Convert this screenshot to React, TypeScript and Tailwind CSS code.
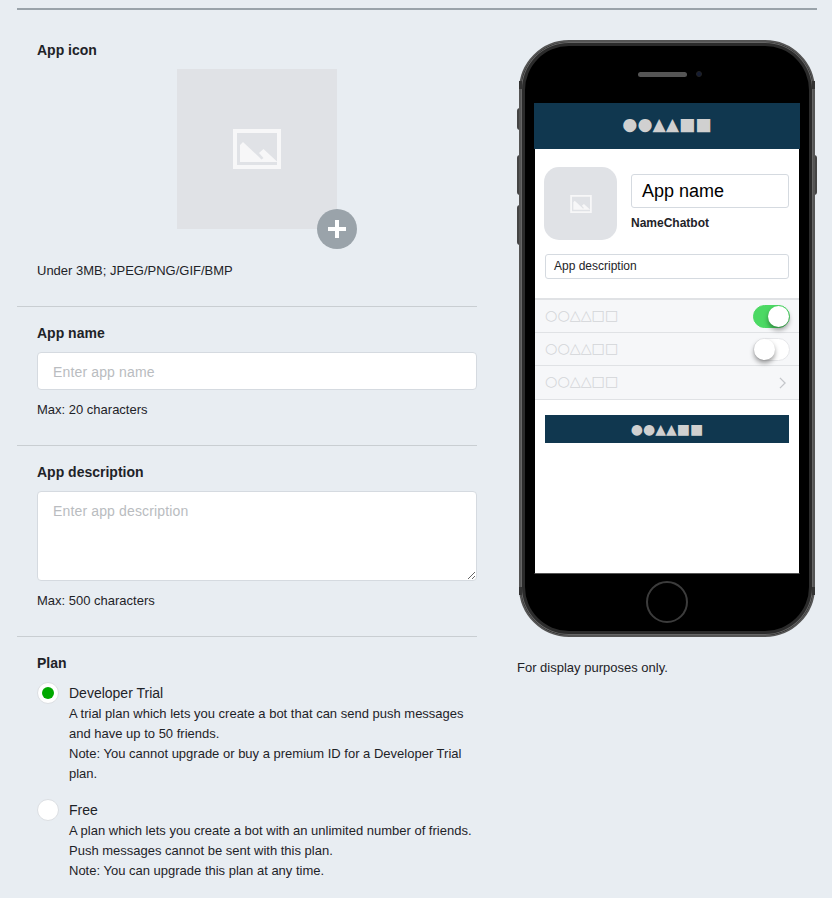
import React from "react";

const ImageIcon: React.FC<{ className?: string }> = ({ className }) => (
  <svg viewBox="0 0 48 40" className={className}>
    <path fill="#f7f7f8" fillRule="evenodd" d="M0 0h48v40H0z M4 4v32h40V4z" />
    <path fill="#f7f7f8" d="M7 33V16l3-3 16 15 2.500 2.500 2-1.500-4.500-5 4.500-4 14 13z" />
  </svg>
);

const Toggle: React.FC<{ on: boolean }> = ({ on }) => (
  <div
    className={`relative h-[23px] w-[37px] rounded-full border ${
      on ? "border-[#4cd964] bg-[#4cd964]" : "border-[#e6e7ea] bg-white"
    }`}
  >
    <div
      className={`absolute top-0 h-[21px] w-[21px] rounded-full bg-white shadow-[0_3px_5px_rgba(0,0,0,0.4)] ${
        on ? "right-0" : "left-0"
      }`}
    />
  </div>
);

const PreviewRow: React.FC<{ children: React.ReactNode; tall?: boolean }> = ({ children, tall }) => (
  <div
    className={`flex items-center justify-between border-b border-[#e0e2e5] pl-[10px] pr-[9px] ${
      tall ? "h-[34px]" : "h-[33px]"
    }`}
  >
    <span className="-translate-y-px font-['DejaVu_Sans',sans-serif] text-[14.2px] leading-none text-[#d3d5d8]">
      ○○△△□□
    </span>
    {children}
  </div>
);

const Radio: React.FC<{ checked?: boolean }> = ({ checked }) => (
  <div className="mt-[-1px] flex h-[22px] w-[22px] shrink-0 items-center justify-center rounded-full border border-[#dcdfe3] bg-white">
    {checked && <div className="h-3 w-3 rounded-full bg-[#00a800]" />}
  </div>
);

const App: React.FC = () => {
  return (
    <div className="min-h-screen bg-[#e8edf2] px-[17px] pt-2 font-['Liberation_Sans',Arial,sans-serif] text-[13px] leading-5 text-[#1e2328]">
      <div className="h-0.5 w-[800px] bg-[#9aa3aa]" />

      <div className="flex">
        {/* Form column */}
        <div className="w-[460px]">
          <div className="border-b border-[#c9ced2] px-5 pb-[26px] pt-[30px]">
            <h3 className="text-[14px] font-bold">App icon</h3>
            <div className="relative ml-[140px] mt-[9px] flex h-40 w-40 items-center justify-center bg-[#e0e2e6]">
              <ImageIcon className="h-10 w-12" />
              <div className="absolute bottom-[-20px] right-[-20px] flex h-10 w-10 items-center justify-center rounded-full bg-[#9aa3aa]">
                <svg viewBox="0 0 18 18" className="h-[18px] w-[18px]">
                  <path fill="#fff" d="M7 0h4v7h7v4h-7v7H7v-7H0V7h7z" />
                </svg>
              </div>
            </div>
            <p className="mt-[31px] translate-y-px">Under 3MB; JPEG/PNG/GIF/BMP</p>
          </div>

          <div className="border-b border-[#c9ced2] px-5 pb-[26px] pt-4">
            <h3 className="text-[14px] font-bold">App name</h3>
            <input
              placeholder="Enter app name"
              className="mt-[9px] block h-[38px] w-[440px] rounded border border-[#d5dae0] bg-white px-[15px] pt-0.5 text-[14px] tracking-[0.15px] outline-none placeholder:text-[#b9bcc0]"
            />
            <p className="mt-[9px] translate-y-px">Max: 20 characters</p>
          </div>

          <div className="border-b border-[#c9ced2] px-5 pb-[26px] pt-4">
            <h3 className="text-[14px] font-bold">App description</h3>
            <textarea
              placeholder="Enter app description"
              className="mt-[9px] block h-[90px] w-[440px] rounded border border-[#d5dae0] bg-white px-[15px] py-[9px] text-[14px] tracking-[0.15px] outline-none placeholder:text-[#b9bcc0]"
            />
            <p className="mt-[9px] translate-y-px">Max: 500 characters</p>
          </div>

          <div className="px-5 pt-4">
            <h3 className="text-[14px] font-bold">Plan</h3>
            <div className="mt-[10px] flex gap-[10px]">
              <Radio checked />
              <div>
                <div className="text-[14px]">Developer Trial</div>
                <p className="translate-y-px whitespace-nowrap">
                  A trial plan which lets you create a bot that can send push messages
                  <br />
                  and have up to 50 friends.
                  <br />
                  Note: You cannot upgrade or buy a premium ID for a Developer Trial
                  <br />
                  plan.
                </p>
              </div>
            </div>
            <div className="mt-[17px] flex gap-[10px]">
              <Radio />
              <div>
                <div className="text-[14px]">Free</div>
                <p className="translate-y-px whitespace-nowrap">
                  A plan which lets you create a bot with an unlimited number of friends.
                  <br />
                  Push messages cannot be sent with this plan.
                  <br />
                  Note: You can upgrade this plan at any time.
                </p>
              </div>
            </div>
          </div>
        </div>

        {/* Phone preview */}
        <div className="ml-10 pt-[30px]">
          <div className="relative ml-0.5 h-[597px] w-[296px]">
            <div className="absolute left-[-2px] top-[68px] h-[22px] w-[3px] rounded-l-sm bg-[#444]" />
            <div className="absolute left-[-2px] top-[115px] h-10 w-[3px] rounded-l-sm bg-[#444]" />
            <div className="absolute left-[-2px] top-[165px] h-10 w-[3px] rounded-l-sm bg-[#444]" />
            <div className="absolute right-[-2px] top-[115px] h-10 w-[3px] rounded-r-sm bg-[#444]" />

            <div className="relative flex h-full w-full flex-col items-center rounded-[50px] border-2 border-[#555] bg-black pt-[61px] shadow-[inset_0_0_0_1px_#666,inset_0_0_0_4px_#2b2b2b]">
              <div className="absolute left-[117px] top-[30px] h-[5px] w-[49px] rounded-full bg-[#555]" />
              <div className="absolute left-[175px] top-[29px] h-[6px] w-[6px] rounded-full border border-[#222] bg-[#141c33]" />

              {/* antenna bands on the frame */}
              <div className="absolute left-[-2px] top-[39px] h-2 w-[3px] bg-[#333]" />
              <div className="absolute right-[-2px] top-[39px] h-2 w-[3px] bg-[#333]" />
              <div className="absolute bottom-[40px] left-[-2px] h-2 w-[3px] bg-[#333]" />
              <div className="absolute bottom-[40px] right-[-2px] h-2 w-[3px] bg-[#333]" />

              <div className="h-[471px] w-[266px] border-x border-b border-x-black border-b-[#555] bg-white">
                <div className="mx-[-1px] flex h-[46px] items-center justify-center bg-[#10374f] pb-[3px] font-['DejaVu_Sans',sans-serif] text-[17.3px] leading-none text-[#d0d0d0]">
                  ●●▲▲■■
                </div>
                <div className="flex pl-[9px] pr-[10px] pt-[18px]">
                  <div className="flex h-[73px] w-[73px] shrink-0 items-center justify-center rounded-[15px] bg-[#e0e2e6]">
                    <ImageIcon className="h-[18px] w-[22px]" />
                  </div>
                  <div className="ml-[14px] flex-1 pt-[7px]">
                    <div className="h-[34px] rounded-[3px] border border-[#d5dae0] pl-[10px] text-[18px] leading-8 text-black">
                      App name
                    </div>
                    <div className="mt-[5px] text-[12px] font-bold leading-[20px] text-[#1e2328]">NameChatbot</div>
                  </div>
                </div>
                <div className="mx-[10px] mt-[14px] h-[25px] rounded-[3px] border border-[#d5dae0] pl-2 text-[12px] leading-[22px]">
                  App description
                </div>
                <div className="mt-[19px] border-t-2 border-[#e0e2e5] bg-[#f6f7f9]">
                  <PreviewRow>
                    <Toggle on />
                  </PreviewRow>
                  <PreviewRow>
                    <Toggle on={false} />
                  </PreviewRow>
                  <PreviewRow tall>
                    <svg viewBox="0 0 8 14" className="mr-1 h-[12px] w-[7px]">
                      <path d="M1 1l6 6-6 6" fill="none" stroke="#c4c6ca" strokeWidth="1.500" />
                    </svg>
                  </PreviewRow>
                </div>
                <div className="mx-[10px] mt-[15px] flex h-7 items-center justify-center bg-[#10374f] font-['DejaVu_Sans',sans-serif] text-[14px] leading-none text-[#d0d0d0]">
                  ●●▲▲■■
                </div>
              </div>

              <div className="mt-[7px] h-[42px] w-[42px] rounded-full border-2 border-[#3c3c3c]" />
            </div>
          </div>
          <p className="mt-5 translate-y-px">For display purposes only.</p>
        </div>
      </div>
    </div>
  );
};

export default App;
